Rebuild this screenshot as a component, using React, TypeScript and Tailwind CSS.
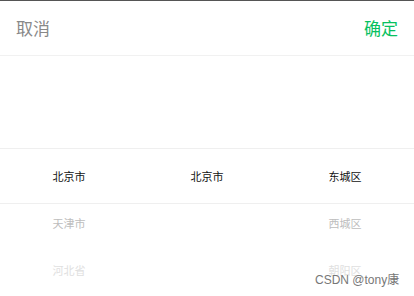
const columns = [
  ["北京市", "天津市", "河北省"],
  ["北京市"],
  ["东城区", "西城区", "朝阳区"],
];

const tones = ["text-[#111]", "text-[#bdbdbd]", "text-[#e0e0e0]"];

const App = () => {
  return (
    <div className="relative h-[296px] w-[414px] overflow-hidden border-t border-[#555] bg-white font-['Noto_Sans_CJK_SC',sans-serif]">
      <header className="flex h-[55px] items-center justify-between border-b border-[#f1f1f1] px-[16px] text-[17px]">
        <span className="text-[#888]">取消</span>
        <span className="text-[#07c160]">确定</span>
      </header>
      <div className="relative h-[240px]">
        <div className="grid grid-cols-3 pt-[97px]">
          {columns.map((col, i) => (
            <div key={i} className="flex flex-col">
              {col.map((item, j) => (
                <div
                  key={item}
                  className={`flex h-[47px] items-center justify-center text-[11px] ${tones[j]}`}
                >
                  {item}
                </div>
              ))}
            </div>
          ))}
        </div>
        <div className="absolute left-0 right-0 top-[92px] h-[56px] border-y border-[#efefef]" />
      </div>
      <span className="absolute left-[315px] top-[270px] font-['Liberation_Sans','Noto_Sans_CJK_SC',sans-serif] text-[12px] text-[#777]">
        CSDN @tony康
      </span>
    </div>
  );
};

export default App;
